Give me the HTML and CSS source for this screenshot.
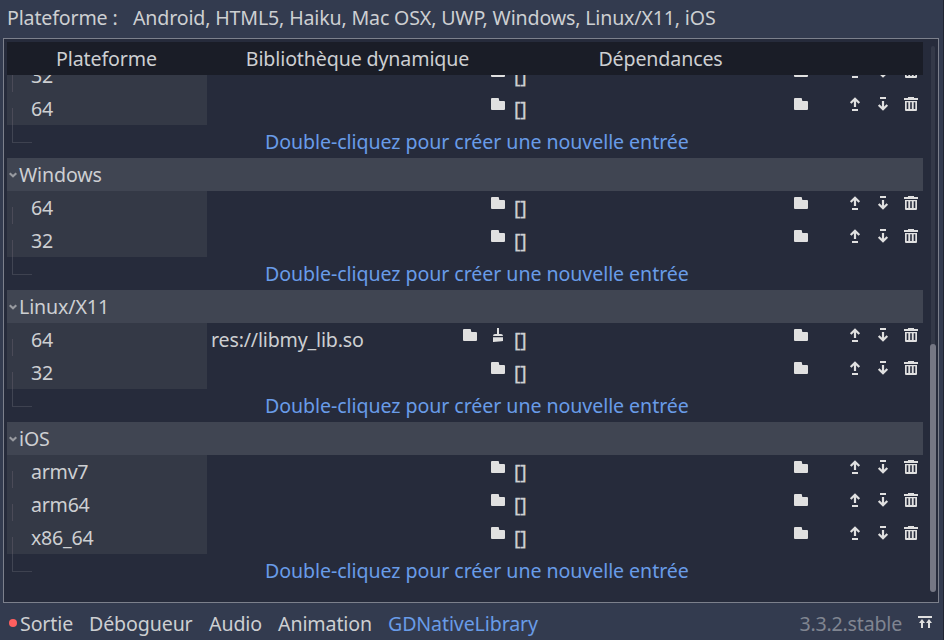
FILE: index.html
```html
<!DOCTYPE html>
<html lang="fr">
<head>
<meta charset="utf-8">
<title>GDNativeLibrary</title>
<link rel="stylesheet" href="styles.css">
</head>
<body>
<svg class="defs" width="0" height="0">
  <symbol id="folder" viewBox="0 0 14 14"><path d="M1 1h6q1 0 1 1v1q0 1 1 1h4q1 0 1 1v7q0 1-1 1H1q-1 0-1-1V2q0-1 1-1z"/></symbol>
  <symbol id="up" viewBox="0 0 14 14"><path d="M7 10V2M2.7 6 7 1.7 11.3 6" class="stroke"/><path d="M4 12h6v2H4z"/></symbol>
  <symbol id="down" viewBox="0 0 14 14"><path d="M7 4v8M2.7 8 7 12.3 11.3 8" class="stroke"/><path d="M4 0h6v2H4z"/></symbol>
  <symbol id="trash" viewBox="0 0 14 14"><path d="M4 0h6v1h4v2H0V1h4zM1 4h12v9q0 1-1 1H2q-1 0-1-1zM2.7 5.3v6.8h1.6V5.3zM6.2 5.3v6.8h1.6V5.3zM9.7 5.3v6.8h1.6V5.3z" fill-rule="evenodd"/></symbol>
  <symbol id="broom" viewBox="0 0 14 14"><path d="M6 0h2v6h2q2 0 2 2H2q0-2 2-2h2zM2 9.2h10V13q-1 .4-4 .4L2 14z"/></symbol>
  <symbol id="chevron" viewBox="0 0 8 6"><path d="M.7 1.2 4 4.2 7.3 1.2" class="stroke"/></symbol>
  <symbol id="expand" viewBox="0 0 14 12"><path d="M0 0h14v2H0zM4 3l3 4H5v5H3V7H1zM11 3l3 4h-2v5h-2V7H8z"/></symbol>
</svg>
<div class="app">
  <header class="platforms"><span class="label">Plateforme :</span><span>Android, HTML5, Haiku, Mac OSX, UWP, Windows, Linux/X11, iOS</span></header>
  <main class="panel">
    <div class="tree">
      <div class="titles"><span class="t1">Plateforme</span><span class="t2">Bibliothèque dynamique</span><span class="t3">Dépendances</span></div>
      <div class="rows" id="rows"></div>
    </div>
    <div class="scroll"><div class="grabber"></div></div>
  </main>
  <footer class="status">
    <i class="dot"></i>
    <span class="tab sortie">Sortie</span><span class="tab debog">Débogueur</span><span class="tab audio">Audio</span><span class="tab anim">Animation</span><span class="tab active">GDNativeLibrary</span>
    <span class="version">3.3.2.stable</span>
    <svg class="expand"><use href="#expand"/></svg>
  </footer>
</div>
<script src="tree.js"></script>
</body>
</html>
```
FILE: tree.js
```js
const groups = [
  { name: null, items: [["32", ""], ["64", ""]] },
  { name: "Windows", items: [["64", ""], ["32", ""]] },
  { name: "Linux/X11", items: [["64", "res://libmy_lib.so"], ["32", ""]] },
  { name: "iOS", items: [["armv7", ""], ["arm64", ""], ["x86_64", ""]] }
];
const icon = (id) => `<svg class="icon ${id}"><use href="#${id}"/></svg>`;
let html = "";
for (const group of groups) {
  if (group.name) {
    html += `<div class="row category"><svg class="chevron"><use href="#chevron"/></svg><span>${group.name}</span></div>`;
  }
  for (const [arch, path] of group.items) {
    html += `<div class="row entry"><div class="arch">${arch}</div>` +
      `<div class="lib"><span class="path">${path}</span>${icon("folder")}${path ? icon("broom") : ""}</div>` +
      `<div class="deps"><span class="brackets">[]</span>${icon("folder")}</div>` +
      `<div class="actions">${icon("up")}${icon("down")}${icon("trash")}</div></div>`;
  }
  html += `<div class="row add"><span>Double-cliquez pour créer une nouvelle entrée</span></div>`;
}
document.getElementById("rows").innerHTML = html;
```
FILE: styles.css
```css
* { box-sizing: border-box; }
body { margin: 0; }
.defs { position: absolute; }
.app {
  width: 944px; height: 640px; overflow: hidden;
  display: flex; flex-direction: column;
  background: #333b4f; color: #cdcfd2;
  border-right: 1px solid #202431;
  font: 19.6px/33px "Noto Sans", sans-serif;
  letter-spacing: -0.12px;
  white-space: nowrap;
}
.platforms { height: 38px; padding: 1px 0 0 7px; display: flex; letter-spacing: -0.16px; }
.label { width: 126px; }
.panel {
  width: 936px; height: 565px; margin-left: 3px; padding: 3px 0 0 3px;
  border: 1px solid #7c808c; background: #262b3b;
  display: flex; justify-content: space-between;
}
.tree { width: 916px; }
.titles {
  height: 33px; background: #1a1d27; display: grid;
  grid-template-columns: 199px 303px 414px; text-align: center;
}
.t3 { padding-right: 111px; }
.rows { height: 520px; overflow: hidden; }
.rows .row:first-child { margin-top: -16px; }
.row { height: 33px; }
.category { background: #404552; display: flex; align-items: center; }
.chevron { width: 8px; height: 6px; margin: 0 2px; opacity: .55; }
.entry { display: grid; grid-template-columns: 200px 303px 303px 110px; }
.arch { background: #343946; padding-left: 24px; position: relative; letter-spacing: -0.25px; }
.arch::before, .add::before {
  content: ""; position: absolute; left: 5px; top: 16px; height: 17px;
  border-left: 1px solid #4b4b58;
}
.lib, .deps { display: flex; padding: 0 5px 0 4px; }
.path { flex: 1; letter-spacing: -0.17px; }
.brackets { flex: 1; -webkit-text-stroke: .3px #cdcfd2; }
.icon { width: 14px; height: 14px; margin-top: 5px; flex: none; }
.broom { margin-left: 14px; }
.actions { display: flex; gap: 14px; padding-left: 35px; }
.add { position: relative; color: #699ce8; padding-left: 258px; letter-spacing: -0.07px; }
.add::before { top: 0; width: 19px; border-bottom: 1px solid #3e4250; border-left-color: #414553; }
svg { fill: #e0e0e0; display: block; }
.stroke { fill: none; stroke: #e0e0e0; stroke-width: 2.2; }
.scroll { width: 4px; height: 546px; margin: 4px 3px 0 0; padding-top: 298px; background: #343948; border-radius: 2px; }
.grabber { width: 6px; height: 248px; margin-left: -1px; background: #757784; border-radius: 3px; }
.status { height: 37px; padding: 4px 11px 0 9px; display: flex; }
.dot { width: 8px; height: 8px; margin: 12px 3px 0 0; border-radius: 50%; background: #ff5f5f; }
.sortie { width: 69px; }
.debog { width: 120px; }
.audio { width: 69px; }
.anim { width: 110px; }
.active { color: #699ce8; }
.version { margin-left: auto; color: #808591; letter-spacing: -0.2px; }
.expand { width: 14px; height: 12px; margin: 9px 0 0 16px; }
```
